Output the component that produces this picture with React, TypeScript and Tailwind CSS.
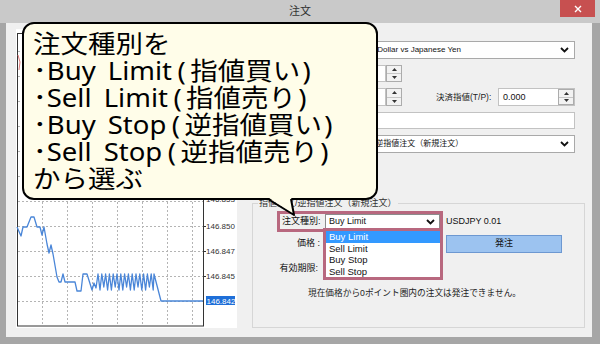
import React from "react";

function Spinner() {
  return (
    <div className="w-[16px] h-full border border-[#acacac] bg-[#f2f2f2] flex flex-col">
      <div className="flex-1 flex items-center justify-center border-b border-[#c6c6c6]">
        <svg width="5" height="3" viewBox="0 0 5 3"><path d="M0 3 L2.5 0 L5 3 Z" fill="#333" /></svg>
      </div>
      <div className="flex-1 flex items-center justify-center">
        <svg width="5" height="3" viewBox="0 0 5 3"><path d="M0 0 L2.5 3 L5 0 Z" fill="#333" /></svg>
      </div>
    </div>
  );
}

function Chevron() {
  return (
    <svg width="9" height="6" viewBox="0 0 9 6">
      <path d="M1 1 L4.5 4.5 L8 1" fill="none" stroke="#111" strokeWidth="1.8" />
    </svg>
  );
}

function Chart() {
  const base: number[][] = [
    [17, 227], [21, 236], [23, 227], [27, 227], [31, 217], [34, 217], [37, 227], [40, 227], [42, 235], [44, 227],
    [47, 244], [49, 253], [51, 245], [53, 254], [57, 277], [59, 282], [61, 282], [63, 274], [65, 282], [75, 282],
    [77, 291], [81, 291], [83, 274], [87, 274], [92, 290], [94, 283], [96, 288],
  ];
  const zz: number[][] = [];
  for (let i = 0; i < 15; i++) {
    zz.push([98 + i * 3.8, 274]);
    zz.push([100 + i * 3.8, i % 3 === 1 ? 287 : 290]);
  }
  const tail = [[154, 274], [161, 301], [203, 301]];
  const pts = [...base, ...zz, ...tail].map((p) => p.join(",")).join(" ");
  const vx = [42, 67, 92, 117, 142, 167, 192];
  const hy = [51, 76, 101, 126, 151, 176, 201, 226, 251, 276, 301];
  const labels: [number, string][] = [[199, "146.853"], [226, "146.850"], [251, "146.847"], [276, "146.845"]];
  return (
    <svg width="221" height="299" viewBox="0 0 221 299" className="block">
      <g transform="translate(-16,-29)">
        {vx.map((x) => (
          <line key={"v" + x} x1={x + 0.5} y1={34} x2={x + 0.5} y2={326} stroke="#b4b4b4" strokeDasharray="2 2" />
        ))}
        {hy.map((y) => (
          <line key={"h" + y} x1={18} y1={y + 0.5} x2={203} y2={y + 0.5} stroke="#b4b4b4" strokeDasharray="2 2" />
        ))}
        <rect x={17.5} y={33.5} width={186} height={292.5} fill="none" stroke="#333" strokeWidth="1" />
        <polyline points="18,55 20,62 19,70" fill="none" stroke="#e07a7a" strokeWidth="1" />
        <polyline points={pts} fill="none" stroke="#4a86d8" strokeWidth="1.3" strokeLinejoin="round" />
        {labels.map(([y, t]) => (
          <g key={t}>
            <line x1={203} y1={y + 0.5} x2={206} y2={y + 0.5} stroke="#333" />
            <text x={206} y={y + 3} fontSize="8" fill="#333" fontFamily="Liberation Sans, sans-serif">{t}</text>
          </g>
        ))}
        <rect x={206} y={296} width={29} height={9} fill="#1f6fd8" />
        <text x={206.5} y={303.5} fontSize="8" fill="#fff" fontFamily="Liberation Sans, sans-serif">146.842</text>
      </g>
    </svg>
  );
}

function Line({ a, w, b }: { a: string; w: string; b: string }) {
  return (
    <div className="flex whitespace-nowrap">
      <span>･{a}</span>
      <span className="ml-[11px]">{w}</span>
      <span className="ml-[5px] mr-[4px]">(</span>
      <span>{b}</span>
      <span className="ml-[2px]">)</span>
    </div>
  );
}

export default function App() {
  return (
    <div className="w-[600px] h-[344px] bg-[#a6a6a6] flex flex-col relative overflow-hidden font-['Liberation_Sans','Noto_Sans_CJK_JP',sans-serif] text-[#111]">
      {/* title bar */}
      <div className="h-[23px] bg-[#c9c9c9] flex items-center justify-center relative shrink-0">
        <span className="text-[11px] text-[#333]">注文</span>
        <div className="absolute right-[5px] top-0 w-[35px] h-[17px] bg-[#c75050] flex items-center justify-center">
          <svg width="8" height="8" viewBox="0 0 8 8">
            <path d="M1 1 L7 7 M7 1 L1 7" stroke="#fff" strokeWidth="1.4" />
          </svg>
        </div>
      </div>
      <div className="flex-1 flex pl-[6px] pr-[8px] pb-[7px]">
        <div className="flex-1 bg-[#f0f0f0] flex">
          {/* left chart */}
          <div className="ml-[10px] mt-[6px] mb-[9px] w-[221px] bg-white shrink-0">
            <Chart />
          </div>
          {/* right form */}
          <div className="flex-1 flex flex-col text-[8.5px]">
            <div className="mt-[18px] pr-[17px] flex flex-col gap-[6px]">
              <div className="h-[18px] flex items-center">
                <div className="w-[88px] text-right pr-[6px]">通貨ペア:</div>
                <div className="flex-1 h-full bg-white border border-[#a9a9a9] flex items-center justify-between pl-[3px] pr-[5px]">
                  <span className="text-[8px]">USDJPY, US Dollar vs Japanese Yen</span>
                  <Chevron />
                </div>
              </div>
              <div className="h-[17px] flex items-center">
                <div className="w-[93px] text-right pr-[6px]">数量:</div>
                <div className="w-[56px] h-full bg-white border border-[#c2c2c2]">
                  <span className="pl-[3px] text-[9px] leading-[15px]">0.01</span>
                </div>
                <div className="h-full"><Spinner /></div>
              </div>
              <div className="h-[18px] flex items-center">
                <div className="w-[93px] text-right pr-[6px]">決済逆指値(S/L):</div>
                <div className="w-[56px] h-full bg-white border border-[#c2c2c2]">
                  <span className="pl-[3px] text-[9px] leading-[16px]">0.000</span>
                </div>
                <div className="h-full"><Spinner /></div>
                <div className="ml-[34px] w-[62px] text-[8.5px] text-[#222]">決済指値(T/P):</div>
                <div className="flex-1 h-full bg-white border border-[#c2c2c2] flex justify-between">
                  <span className="pl-[4px] text-[9px] leading-[16px]">0.000</span>
                  <Spinner />
                </div>
              </div>
              <div className="h-[17px] flex items-center">
                <div className="w-[93px] text-right pr-[6px]">コメント:</div>
                <div className="flex-1 h-full bg-white border border-[#c2c2c2]" />
              </div>
              <div className="h-[18px] flex items-center">
                <div className="w-[100px] text-right pr-[6px]">注文種別:</div>
                <div className="flex-1 h-full bg-white border border-[#a9a9a9] flex items-center justify-between pl-[3px] pr-[5px]">
                  <span className="text-[8px]">指値注文/逆指値注文（新規注文）</span>
                  <Chevron />
                </div>
              </div>
            </div>
            {/* group box */}
            <fieldset className="mt-[44px] ml-[15px] mr-[7px] mb-[9px] flex-1 border border-[#d6d6d6] px-0 pb-0">
              <legend className="ml-[5px] px-[1px] text-[9px] leading-[12px] text-[#333]">指値注文/逆指値注文（新規注文）</legend>
              <div className="mt-[2px] ml-[24px] flex items-center">
                <div className="relative border-[3px] border-[#b8687f] flex items-center">
                  <span className="w-[45px] pl-[2px] text-[9px] leading-[15px]">注文種別:</span>
                  <div className="w-[115px] h-[15px] bg-white border border-[#8c8c8c] flex items-center justify-between pl-[3px] pr-[4px]">
                    <span className="text-[9px]">Buy Limit</span>
                    <Chevron />
                  </div>
                  <div className="absolute left-[43px] top-[calc(100%-1px)] w-[120px] border-[3px] border-[#b8687f] bg-white flex flex-col text-[9.5px]">
                    <div className="h-[11.5px] leading-[11.5px] bg-[#3399ff] text-white pl-[3px]">Buy Limit</div>
                    <div className="h-[11.5px] leading-[11.5px] pl-[3px]">Sell Limit</div>
                    <div className="h-[11.5px] leading-[11.5px] pl-[3px]">Buy Stop</div>
                    <div className="h-[11.5px] leading-[11.5px] pl-[3px]">Sell Stop</div>
                  </div>
                </div>
                <span className="ml-[3px] text-[9px]">USDJPY 0.01</span>
              </div>
              <div className="mt-[3px] flex items-center h-[18px]">
                <div className="w-[72px] text-right pr-[5px] text-[9px]">価格 :</div>
                <div className="w-[115px] h-[16px] bg-white border border-[#c2c2c2]" />
                <div className="ml-[6px] w-[116px] h-full bg-[#9cc3f0] border border-[#6d98d1] flex items-center justify-center text-[9px]">発注</div>
              </div>
              <div className="mt-[8px] flex items-center h-[16px]">
                <div className="w-[70px] text-right pr-[5px] text-[9px]">有効期限:</div>
              </div>
              <div className="mt-[10px] pr-[8px] text-center text-[8.7px] text-[#222]">現在価格から0ポイント圏内の注文は発注できません。</div>
            </fieldset>
          </div>
        </div>
      </div>

      {/* callout */}
      <div className="absolute left-[22px] top-[22px] w-[356px] h-[178px] border-2 border-black rounded-[12px] bg-[#fffde9] pl-[9px] pt-[6px] font-['Noto_Sans','Noto_Sans_CJK_JP',sans-serif] text-[25px] leading-[27px] text-black">
        <div className="origin-left scale-x-[1.1]">
          <div>注文種別を</div>
          <Line a="Buy" w="Limit" b="指値買い" />
          <Line a="Sell" w="Limit" b="指値売り" />
          <Line a="Buy" w="Stop" b="逆指値買い" />
          <Line a="Sell" w="Stop" b="逆指値売り" />
          <div>から選ぶ</div>
        </div>
      </div>
      <svg className="absolute left-[262px] top-[196px]" width="36" height="22" viewBox="0 0 36 22">
        <path d="M5 0.5 L32 19 L29 0.5 Z" fill="#fffde9" />
        <path d="M6 3 L32 19 L29 3" fill="none" stroke="#000" strokeWidth="2" strokeLinejoin="round" />
      </svg>
    </div>
  );
}
